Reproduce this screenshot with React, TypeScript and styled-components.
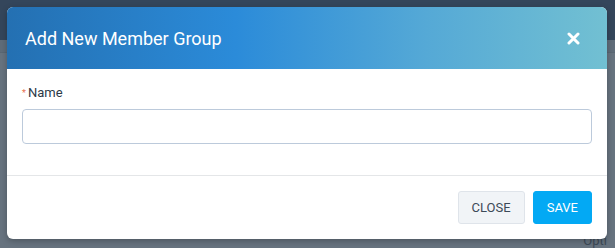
import styled, { createGlobalStyle } from 'styled-components';

const GlobalStyle = createGlobalStyle`
  html, body {
    margin: 0;
    padding: 0;
    width: 615px;
    height: 248px;
    overflow: hidden;
    font-family: Roboto, "Liberation Sans", Arial, sans-serif;
  }
`;

const Backdrop = styled.div`
  position: relative;
  width: 615px;
  height: 248px;
  display: flex;
  flex-direction: column;
  background: #67737f;
`;

const TopBar = styled.div`
  height: 40px;
  background: #34465b;
`;

const SubBar = styled.div`
  height: 12px;
  background: #5f6c79;
  border-bottom: 1px solid #5a6773;
`;

const PageBody = styled.div`
  flex: 1;
  display: flex;
  justify-content: flex-end;
  align-items: flex-end;
  padding: 0 8px 0 0;
  color: #3d4a57;
  font-size: 13px;
`;

const Modal = styled.div`
  position: absolute;
  top: 7px;
  left: 7px;
  width: 600px;
  height: 232px;
  display: flex;
  flex-direction: column;
  background: #ffffff;
  border-radius: 6px;
  overflow: hidden;
  box-shadow: 0 2px 6px rgba(0, 0, 0, 0.25);
`;

const Header = styled.div`
  height: 62px;
  display: flex;
  align-items: center;
  justify-content: space-between;
  padding: 0 24px 0 18px;
  background: linear-gradient(90deg, #2470b2 0%, #2b8bd9 38%, #55a9d6 70%, #72c0d2 100%);
`;

const Title = styled.h2`
  margin: 0;
  color: #ffffff;
  font-size: 18px;
  font-weight: 400;
`;

const CloseIcon = styled.button`
  width: 20px;
  height: 20px;
  padding: 0;
  border: 0;
  background: none;
  display: flex;
  align-items: center;
  justify-content: center;
  cursor: pointer;
`;

const Body = styled.div`
  padding: 16px 15px 0;
  height: 107px;
  box-sizing: border-box;
  border-bottom: 1px solid #e4e6e8;
`;

const Label = styled.label`
  display: flex;
  align-items: center;
  gap: 2px;
  font-size: 13px;
  color: #2c3a47;
  margin-bottom: 9px;
`;

const Required = styled.span`
  color: #e7704f;
  font-size: 9px;
`;

const Input = styled.input`
  box-sizing: border-box;
  width: 570px;
  height: 35px;
  border: 1px solid #bccadb;
  border-radius: 4px;
  outline: none;
  padding: 0 10px;
  font-size: 14px;
`;

const Footer = styled.div`
  flex: 1;
  display: flex;
  justify-content: flex-end;
  align-items: flex-start;
  gap: 8px;
  padding: 15px 15px 0;
`;

const Button = styled.button<{ $primary?: boolean }>`
  height: 33px;
  padding: 0 13px;
  border-radius: 3px;
  font-family: Roboto, "Liberation Sans", Arial, sans-serif;
  font-size: 13px;
  text-transform: uppercase;
  cursor: pointer;
  color: ${({ $primary }) => ($primary ? '#ffffff' : '#3c4a58')};
  background: ${({ $primary }) => ($primary ? '#03a9f4' : '#f1f4f7')};
  border: 1px solid ${({ $primary }) => ($primary ? '#03a9f4' : '#dfe4ea')};
`;

export default function App() {
  return (
    <>
      <GlobalStyle />
      <Backdrop>
        <TopBar />
        <SubBar />
        <PageBody>Opti</PageBody>
        <Modal>
          <Header>
            <Title>Add New Member Group</Title>
            <CloseIcon aria-label="Close">
              <svg width="13" height="13" viewBox="0 0 13 13">
                <path d="M2 2 L11 11 M11 2 L2 11" stroke="#ffffff" strokeWidth="3" strokeLinecap="round" />
              </svg>
            </CloseIcon>
          </Header>
          <Body>
            <Label>
              <Required>*</Required>Name
            </Label>
            <Input type="text" />
          </Body>
          <Footer>
            <Button>Close</Button>
            <Button $primary>Save</Button>
          </Footer>
        </Modal>
      </Backdrop>
    </>
  );
}
